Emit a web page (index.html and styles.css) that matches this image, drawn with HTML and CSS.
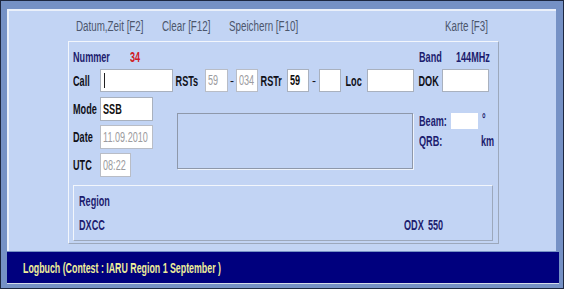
FILE: index.html
```html
<!DOCTYPE html>
<html lang="de">

<head>
    <meta charset="UTF-8">
    <title>Logbuch</title>
    <link rel="stylesheet" href="styles.css">
</head>

<body>

    <div class="frame">
        <div class="client">

            <div class="menu">
                <span class="menu-item m1">Datum,Zeit [F2]</span>
                <span class="menu-item m2">Clear [F12]</span>
                <span class="menu-item m3">Speichern [F10]</span>
                <span class="menu-item">Karte [F3]</span>
            </div>

            <div class="panel">
                <div class="row-top">
                    <span class="info nummer">Nummer</span>
                    <span class="info count">34</span>
                    <span class="info band">Band</span>
                    <span class="info">144MHz</span>
                </div>

                <div class="row-call">
                    <label class="lbl w-call">Call</label>
                    <div class="field w73 cursor"></div>
                    <label class="lbl w-rsts">RSTs</label>
                    <div class="field w23 off"><span class="n">59</span></div>
                    <span class="dash">-</span>
                    <div class="field w22 off"><span class="n">034</span></div>
                    <label class="lbl w-rstr">RSTr</label>
                    <div class="field w22"><span class="n">59</span></div>
                    <span class="dash wide">-</span>
                    <div class="field w22"></div>
                    <label class="lbl w-loc">Loc</label>
                    <div class="field w47"></div>
                    <label class="lbl w-dok">DOK</label>
                    <div class="field w47"></div>
                </div>

                <div class="middle">
                    <div class="left-col">
                        <div class="line">
                            <label class="lbl w-call">Mode</label>
                            <div class="field w53 tall"><span class="n">SSB</span></div>
                        </div>
                        <div class="line">
                            <label class="lbl w-call">Date</label>
                            <div class="field w53 tall off"><span class="n">11.09.2010</span></div>
                        </div>
                        <div class="line">
                            <label class="lbl w-call">UTC</label>
                            <div class="field w31 tall off"><span class="n">08:22</span></div>
                        </div>
                    </div>

                    <div class="memo"></div>

                    <div class="right-col">
                        <div class="beam">
                            <span class="info w-beam">Beam:</span>
                            <div class="beam-box"></div>
                            <span class="info deg">°</span>
                        </div>
                        <div class="qrb">
                            <span class="info w-qrb">QRB:</span>
                            <span class="info">km</span>
                        </div>
                    </div>
                </div>

                <div class="region">
                    <div class="info">Region</div>
                    <div class="region-bottom">
                        <span class="info w-dxcc">DXCC</span>
                        <span class="info w-odx">ODX</span>
                        <span class="info">550</span>
                    </div>
                </div>
            </div>

        </div>

        <div class="status"><span class="status-text">Logbuch (Contest : IARU Region 1 September )</span></div>
    </div>

</body>

</html>
```

FILE: styles.css
```css
body {
    margin: 0;
    width: 564px;
    height: 289px;
    overflow: hidden;
    background-color: #1d2740;
    font-family: "Liberation Sans", Arial, sans-serif;
}

/* narrow face: Arial squeezed sideways */
.n,
.lbl,
.info,
.menu-item,
.status-text {
    display: inline-block;
    white-space: nowrap;
    transform: scaleX(0.65);
    transform-origin: 0 50%;
}

.menu-item {
    transform: scaleX(0.7);
}

.frame {
    margin: 1px;
    width: 562px;
    height: 287px;
    background-color: #7591c5;
    padding: 8px 0 0 6px;
    box-sizing: border-box;
}

.client {
    width: 549px;
    height: 242px;
    box-sizing: border-box;
    background-color: #c2d4f4;
    border-top: 2px solid #eaf0fa;
    border-left: 2px solid #eaf0fa;
}

.menu {
    display: flex;
    height: 30px;
    align-items: center;
    padding-left: 67px;
    font-size: 14px;
    color: #4c566c;
}

.menu-item {
    flex: none;
}

.m1 {
    width: 86px;
}

.m2 {
    width: 67px;
}

.m3 {
    width: 216px;
}

.panel {
    margin-left: 59px;
    width: 431px;
    height: 203px;
    box-sizing: border-box;
    border-top: 1px solid #f2f6fc;
    border-left: 1px solid #f2f6fc;
    border-right: 1px solid #9ca8bc;
    border-bottom: 1px solid #9ca8bc;
    padding: 8px 0 0 4px;
}

.info {
    flex: none;
    color: #1c1c6e;
    font-size: 14px;
    font-weight: bold;
}

.row-top {
    display: flex;
    height: 14px;
    align-items: center;
}

.nummer {
    width: 57px;
}

.count {
    color: #d01c24;
    width: 289px;
}

.band {
    width: 37px;
}

.row-call {
    display: flex;
    align-items: center;
    margin-top: 5px;
    height: 23px;
}

.lbl {
    flex: none;
    font-size: 14px;
    font-weight: bold;
    color: #101018;
    box-sizing: border-box;
}

.w-call {
    width: 27px;
}

.w-rsts {
    width: 32px;
    padding-left: 4px;
}

.w-rstr {
    width: 29px;
    padding-left: 4px;
}

.w-loc {
    width: 26px;
    padding-left: 7px;
}

.w-dok {
    width: 28px;
    padding-left: 7px;
}

.field {
    flex: none;
    height: 23px;
    box-sizing: border-box;
    background-color: #ffffff;
    border: 1px solid #a9b1be;
    font-size: 14px;
    font-weight: bold;
    color: #101010;
    padding: 0 0 0 2px;
    line-height: 21px;
}

.field.off {
    color: #9c9ca0;
    font-weight: normal;
    border-color: #b9bdc6;
}

.field.cursor {
    padding: 3px 0 0 3px;
}

.field.cursor::before {
    content: "";
    display: block;
    width: 1px;
    height: 15px;
    background-color: #202020;
}

.w22 {
    width: 22px;
}

.w23 {
    width: 23px;
}

.w73 {
    width: 73px;
}

.w47 {
    width: 47px;
}

.w53 {
    width: 53px;
}

.w31 {
    width: 31px;
}

.tall {
    height: 24px;
    line-height: 22px;
}

.dash {
    flex: none;
    width: 8px;
    text-align: center;
    font-size: 12px;
    color: #101018;
}

.dash.wide {
    width: 10px;
}

.middle {
    display: flex;
    margin-top: 5px;
    height: 80px;
}

.left-col {
    flex: none;
    display: flex;
    flex-direction: column;
    gap: 4px;
    width: 104px;
}

.line {
    display: flex;
    align-items: center;
}

.memo {
    flex: none;
    margin-top: 16px;
    width: 236px;
    height: 56px;
    box-sizing: border-box;
    border: 1px solid #8e98aa;
    box-shadow: 1px 1px 0 #eef3fb;
}

.right-col {
    flex: none;
    width: 76px;
    margin-left: 6px;
    padding-top: 16px;
}

.beam {
    display: flex;
    align-items: center;
    height: 16px;
}

.w-beam {
    width: 32px;
}

.beam-box {
    flex: none;
    width: 27px;
    height: 16px;
    background-color: #ffffff;
}

.deg {
    margin-left: 4px;
    margin-top: -5px;
}

.qrb {
    display: flex;
    margin-top: 4px;
}

.w-qrb {
    width: 62px;
}

.region {
    margin-top: 8px;
    width: 420px;
    height: 56px;
    box-sizing: border-box;
    border-top: 1px solid #f2f6fc;
    border-left: 1px solid #f2f6fc;
    border-right: 1px solid #9ca8bc;
    border-bottom: 1px solid #9ca8bc;
    padding: 6px 0 0 5px;
}

.region-bottom {
    display: flex;
    margin-top: 7px;
}

.w-dxcc {
    width: 325px;
}

.w-odx {
    width: 24px;
}

.status {
    margin-top: 1px;
    width: 552px;
    height: 32px;
    box-sizing: border-box;
    background-color: #00007e;
    border-bottom: 1px solid #d4dcea;
    padding: 7px 0 0 16px;
}

.status-text {
    color: #eeee9a;
    font-size: 14px;
    font-weight: bold;
    transform: scaleX(0.63);
}
```
